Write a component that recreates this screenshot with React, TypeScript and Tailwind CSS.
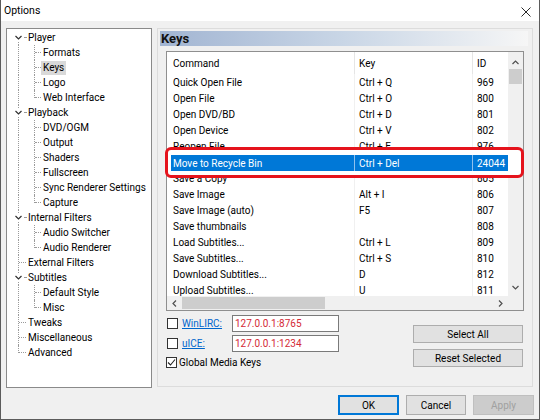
import React from "react";

type TreeItem = { d: 0 | 1; t: string; exp?: boolean; last?: boolean; sel?: boolean };

const tree: TreeItem[] = [
  { d: 0, t: "Player", exp: true },
  { d: 1, t: "Formats" },
  { d: 1, t: "Keys", sel: true },
  { d: 1, t: "Logo" },
  { d: 1, t: "Web Interface", last: true },
  { d: 0, t: "Playback", exp: true },
  { d: 1, t: "DVD/OGM" },
  { d: 1, t: "Output" },
  { d: 1, t: "Shaders" },
  { d: 1, t: "Fullscreen" },
  { d: 1, t: "Sync Renderer Settings" },
  { d: 1, t: "Capture", last: true },
  { d: 0, t: "Internal Filters", exp: true },
  { d: 1, t: "Audio Switcher" },
  { d: 1, t: "Audio Renderer", last: true },
  { d: 0, t: "External Filters" },
  { d: 0, t: "Subtitles", exp: true },
  { d: 1, t: "Default Style" },
  { d: 1, t: "Misc", last: true },
  { d: 0, t: "Tweaks" },
  { d: 0, t: "Miscellaneous" },
  { d: 0, t: "Advanced", last: true },
];

const rows: [string, string, string][] = [
  ["Quick Open File", "Ctrl + Q", "969"],
  ["Open File", "Ctrl + O", "800"],
  ["Open DVD/BD", "Ctrl + D", "801"],
  ["Open Device", "Ctrl + V", "802"],
  ["Reopen File", "Ctrl + E", "976"],
  ["Move to Recycle Bin", "Ctrl + Del", "24044"],
  ["Save a Copy", "", "805"],
  ["Save Image", "Alt + I", "806"],
  ["Save Image (auto)", "F5", "807"],
  ["Save thumbnails", "", "808"],
  ["Load Subtitles...", "Ctrl + L", "809"],
  ["Save Subtitles...", "Ctrl + S", "810"],
  ["Download Subtitles...", "D", "812"],
  ["Upload Subtitles...", "U", "811"],
];

function Chevron({ dir, color = "#505050" }: { dir: "down" | "up" | "left" | "right"; color?: string }) {
  const d =
    dir === "down"
      ? "M0.5 1 L3.5 4 L6.5 1"
      : dir === "up"
      ? "M0.5 4 L3.5 1 L6.5 4"
      : dir === "left"
      ? "M4 0.5 L1 3.5 L4 6.5"
      : "M1 0.5 L4 3.5 L1 6.5";
  const w = dir === "down" || dir === "up" ? 7 : 5;
  const h = dir === "down" || dir === "up" ? 5 : 7;
  return (
    <svg width={w} height={h} viewBox={`0 0 ${w} ${h}`} className="block">
      <path d={d} fill="none" stroke={color} strokeWidth="1.2" />
    </svg>
  );
}

function TreeRow({ item, first }: { item: TreeItem; first: boolean }) {
  const lastTop = item.d === 0 && item.last;
  return (
    <div className="relative h-[15px] flex items-center">
      <div
        className={`absolute left-[11px] w-0 border-l border-dotted border-[#9a9a9a] ${
          first ? "top-[10px] bottom-0" : lastTop ? "top-0 h-[8px]" : "top-0 bottom-0"
        }`}
      />
      {item.d === 0 && !item.exp && (
        <div className="absolute left-[12px] top-[7px] w-[7px] h-0 border-t border-dotted border-[#9a9a9a]" />
      )}
      {item.d === 0 && item.exp && (
        <>
          <div className="absolute left-[7px] top-[4px] w-[9px] h-[7px] bg-white flex items-center justify-center z-10">
            <Chevron dir="down" color="#303030" />
          </div>
          <div className="absolute left-[17px] top-[7px] w-[2px] h-0 border-t border-dotted border-[#9a9a9a]" />
        </>
      )}
      {item.d === 1 && (
        <>
          <div
            className={`absolute left-[27px] w-0 border-l border-dotted border-[#9a9a9a] ${
              item.last ? "top-0 h-[8px]" : "top-0 bottom-0"
            }`}
          />
          <div className="absolute left-[28px] top-[7px] w-[6px] h-0 border-t border-dotted border-[#9a9a9a]" />
        </>
      )}
      <span
        className={`relative px-[2px] leading-[14px] whitespace-nowrap ${
          item.d === 0 ? "ml-[19px]" : "ml-[34px]"
        } ${item.sel ? "bg-[#d9d9d9]" : ""}`}
      >
        {item.t}
      </span>
    </div>
  );
}

function Checkbox({ checked }: { checked?: boolean }) {
  return (
    <div className="w-[11px] h-[11px] border border-[#333333] bg-white flex items-center justify-center shrink-0">
      {checked && (
        <svg width="9" height="9" viewBox="0 0 9 9" className="block">
          <path d="M1 4.5 L3.5 7 L8 1.5" fill="none" stroke="#222" strokeWidth="1.1" />
        </svg>
      )}
    </div>
  );
}

export default function App() {
  return (
    <div className="w-[540px] h-[420px] flex flex-col bg-[#f0f0f0] border-x border-b border-[#5b5b5b] font-['Roboto',sans-serif] text-[10px] text-black overflow-hidden">
      {/* Title bar */}
      <div className="h-[21px] bg-white flex items-center justify-between pl-[3px] pr-[8px] shrink-0">
        <span className="text-[10.5px] leading-[12px] mt-[1px]">Options</span>
        <svg width="10" height="10" viewBox="0 0 10 10" className="block mt-[2px]">
          <path d="M0.5 0.5 L9.5 9.5 M9.5 0.5 L0.5 9.5" stroke="#111" strokeWidth="0.9" />
        </svg>
      </div>

      {/* Main */}
      <div className="flex items-start pt-[7px] pl-[5px] gap-[5px] h-[367px] shrink-0">
        {/* Tree */}
        <div className="w-[146px] h-[360px] bg-white border border-[#8a8a8a] pt-[1px] flex flex-col">
          {tree.map((it, i) => (
            <TreeRow key={i} item={it} first={i === 0} />
          ))}
        </div>

        {/* Panel */}
        <div className="w-[376px] h-[359px] border border-[#dcdcdc] flex flex-col">
          <div className="mx-[2px] mt-[2px] mr-[4px] h-[15px] bg-gradient-to-r from-[#a2b5d2] via-[#c9d6e6] to-[#f6f6f6] flex items-center">
            <span className="text-[13px] font-bold leading-[15px] pl-[1px] text-[#111]">Keys</span>
          </div>

          <div className="px-[8px] pt-[5px] flex flex-col">
            {/* List */}
            <div className="relative w-[358px] h-[260px] border border-[#8f8f8f] bg-white flex flex-col">
              <div className="flex flex-1 min-h-0">
                <div className="flex-1 min-w-0 overflow-hidden">
                  <div className="w-[400px]">
                    <div className="flex h-[22px] items-center">
                      <div className="w-[187px] pl-[6px] h-full flex items-center">Command</div>
                      <div className="w-[118px] pl-[4px] h-full flex items-center border-l border-[#e5e5e5]">Key</div>
                      <div className="w-[60px] pl-[4px] h-full flex items-center border-l border-[#e5e5e5]">ID</div>
                    </div>
                    {rows.map(([c, k, id], i) => (
                      <div key={i} className="flex h-[16px] items-center">
                        <div className="w-[187px] pl-[6px] h-full flex items-center whitespace-nowrap">{c}</div>
                        <div className="w-[118px] pl-[4px] h-full flex items-center border-l border-[#f0f0f0]">{k}</div>
                        <div className="w-[60px] pl-[4px] h-full flex items-center border-l border-[#f0f0f0]">{id}</div>
                      </div>
                    ))}
                  </div>
                </div>
                {/* vertical scrollbar */}
                <div className="w-[15px] bg-[#f0f0f0] flex flex-col">
                  <div className="h-[17px] flex items-center justify-center pt-[3px]">
                    <Chevron dir="up" />
                  </div>
                  <div className="mx-[1px] h-[15px] bg-[#cdcdcd]" />
                  <div className="flex-1" />
                  <div className="h-[17px] flex items-center justify-center">
                    <Chevron dir="down" />
                  </div>
                </div>
              </div>
              {/* horizontal scrollbar */}
              <div className="h-[14px] flex bg-[#f0f0f0] shrink-0">
                <div className="w-[15px] flex items-center justify-center">
                  <Chevron dir="left" />
                </div>
                <div className="w-[143px] my-[1px] bg-[#cdcdcd]" />
                <div className="flex-1" />
                <div className="w-[15px] flex items-center justify-center">
                  <Chevron dir="right" />
                </div>
                <div className="w-[15px]" />
              </div>

              {/* highlighted selection overlay */}
              <div className="absolute left-[-2px] top-[95px] w-[359px] h-[31px] border-[3px] border-[#e5131c] rounded-[6px] bg-white">
                <div className="absolute left-[3px] top-[5px] w-[337px] h-[16px] bg-[#0078d7] text-white flex items-center">
                  <div className="w-[183px] pl-[2px] h-full flex items-center whitespace-nowrap">Move to Recycle Bin</div>
                  <div className="w-[118px] pl-[4px] h-full flex items-center border-l border-[#8fc1ee]">Ctrl + Del</div>
                  <div className="flex-1 pl-[4px] h-full flex items-center border-l border-[#8fc1ee]">24044</div>
                </div>
              </div>
            </div>

            {/* Bottom controls */}
            <div className="flex justify-between">
              <div className="flex flex-col pt-[4px]">
                <div className="flex items-center h-[17px]">
                  <div className="w-[16px] pl-[1px]">
                    <Checkbox />
                  </div>
                  <span className="w-[50px] text-[#0066cc] underline">WinLIRC:</span>
                  <div className="w-[107px] h-[17px] border border-[#7a7a7a] bg-white pl-[2px] flex items-center text-[#d42a36]">
                    127.0.0.1:8765
                  </div>
                </div>
                <div className="flex items-center h-[17px] mt-[3px]">
                  <div className="w-[16px] pl-[1px]">
                    <Checkbox />
                  </div>
                  <span className="w-[50px] text-[#0066cc] underline">uICE:</span>
                  <div className="w-[107px] h-[17px] border border-[#7a7a7a] bg-white pl-[2px] flex items-center text-[#d42a36]">
                    127.0.0.1:1234
                  </div>
                </div>
                <div className="flex items-center h-[11px] mt-[5px]">
                  <Checkbox checked />
                  <span className="ml-[2px]">Global Media Keys</span>
                </div>
              </div>
              <div className="flex flex-col pt-[14px] gap-[6px] mr-[1px]">
                <div className="w-[110px] h-[18px] bg-[#e1e1e1] border border-[#adadad] flex items-center justify-center">
                  Select All
                </div>
                <div className="w-[110px] h-[18px] bg-[#e1e1e1] border border-[#adadad] flex items-center justify-center">
                  Reset Selected
                </div>
              </div>
            </div>
          </div>
        </div>
      </div>

      {/* Dialog buttons */}
      <div className="flex justify-end gap-[7px] pr-[5px] pt-[7px]">
        <div className="w-[61px] h-[20px] bg-[#e1e1e1] border border-[#0078d7] shadow-[inset_0_0_0_1px_#0078d7] flex items-center justify-center">
          OK
        </div>
        <div className="w-[60px] h-[20px] bg-[#e1e1e1] border border-[#adadad] flex items-center justify-center">
          Cancel
        </div>
        <div className="w-[61px] h-[20px] bg-[#cccccc] border border-[#bfbfbf] text-[#a0a0a0] flex items-center justify-center">
          Apply
        </div>
      </div>
    </div>
  );
}
